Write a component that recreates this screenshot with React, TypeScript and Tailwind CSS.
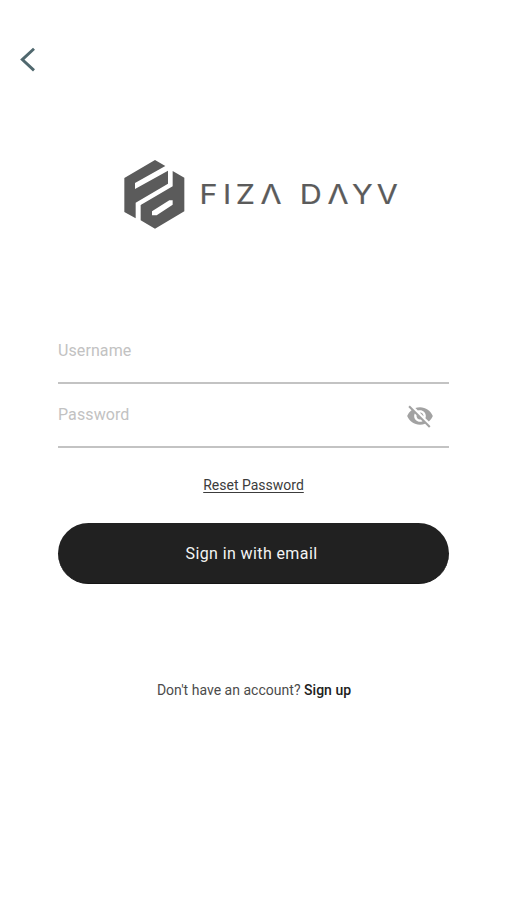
function LogoMark() {
  return (
    <svg className="h-[90px] w-20 shrink-0" viewBox="0 0 240 270" fill="#5b5b5b" aria-hidden="true">
      <path d="M28 84 120 30 151 48 60 99V117L159 62V101L62 158V205L28 186Z" />
      <path fillRule="evenodd" d="M173 63 208 83V184L120 236 77 211V165L173 109ZM111 184V196H125L173 164V151H163Z" />
    </svg>
  );
}

function Wordmark() {
  return (
    <svg
      className="h-[50px] w-[220px] shrink-0"
      viewBox="0 0 191.3 50"
      preserveAspectRatio="none"
      role="img"
      aria-label="FIZA DAYV"
    >
      <text
        x="8.2 28.8 39.8 61.3 80 95.4 119.6 140.9 162.4"
        y="33.6"
        className="font-['Inter',sans-serif] text-[26.5px] font-normal"
        fill="#5b5b5b"
        stroke="#5b5b5b"
        strokeWidth="0.2"
      >
        FIZΛ DΛYV
      </text>
    </svg>
  );
}

function HiddenEye() {
  return (
    <svg className="mt-px mr-[15px] size-7" viewBox="0 0 24 24" fill="#a2a2a2" aria-hidden="true">
      <path d="M12 7c2.76 0 5 2.24 5 5 0 .65-.13 1.26-.36 1.83l2.92 2.92c1.51-1.26 2.7-2.89 3.43-4.75-1.73-4.39-6-7.5-11-7.5-1.4 0-2.74.25-3.98.7l2.16 2.16C10.74 7.13 11.35 7 12 7zM2 4.27l2.28 2.28.46.46C3.08 8.3 1.78 10.02 1 12c1.73 4.39 6 7.5 11 7.5 1.55 0 3.03-.3 4.38-.84l.42.42L19.73 22 21 20.73 3.27 3 2 4.27zM7.53 9.8l1.55 1.55c-.05.21-.08.43-.08.65 0 1.66 1.34 3 3 3 .22 0 .44-.03.65-.08l1.55 1.55c-.67.33-1.41.53-2.2.53-2.76 0-5-2.24-5-5 0-.79.2-1.53.53-2.2zm4.31-.78l3.15 3.15.02-.16c0-1.66-1.34-3-3-3l-.17.01z" />
    </svg>
  );
}

export default function App() {
  return (
    <main className="flex h-[900px] w-full flex-col bg-white font-['Roboto',sans-serif]">
      <button className="mt-10 ml-2.5 size-10" aria-label="Back">
        <svg viewBox="0 0 40 40" fill="none" stroke="#50686e" strokeWidth="2.9">
          <path d="M24 8.8 12.3 19.6 24 30.4" />
        </svg>
      </button>
      <div className="mt-[70px] ml-[115px] flex h-[90px]">
        <LogoMark />
        <div className="-ml-[5px] pt-5">
          <Wordmark />
        </div>
      </div>
      <form className="mt-[79px] mr-[58px] ml-[58px] flex flex-col">
        <div className="flex h-[65px] items-center border-b-2 border-[#c3c3c3] text-base tracking-[0.1px] text-[#c2c2c2]">
          <span>Username</span>
        </div>
        <div className="flex h-16 items-center justify-between border-b-2 border-[#c3c3c3] text-base tracking-[0.1px] text-[#c2c2c2]">
          <span>Password</span>
          <HiddenEye />
        </div>
        <a className="mt-[27px] self-center text-sm leading-5 text-[#3c3c3c] underline underline-offset-2">Reset Password</a>
        <button type="button" className="mt-7 h-[61px] rounded-full border-b border-[#151515] bg-[#212121] pt-0.5 pr-1 text-base tracking-[0.4px] text-[#f4f4f4]">
          Sign in with email
        </button>
      </form>
      <p className="mt-24 pl-px text-center text-sm leading-5 tracking-[0.02px] text-[#4b4b4b]">
        Don't have an account? <span className="font-medium text-[#202020]">Sign up</span>
      </p>
    </main>
  );
}
